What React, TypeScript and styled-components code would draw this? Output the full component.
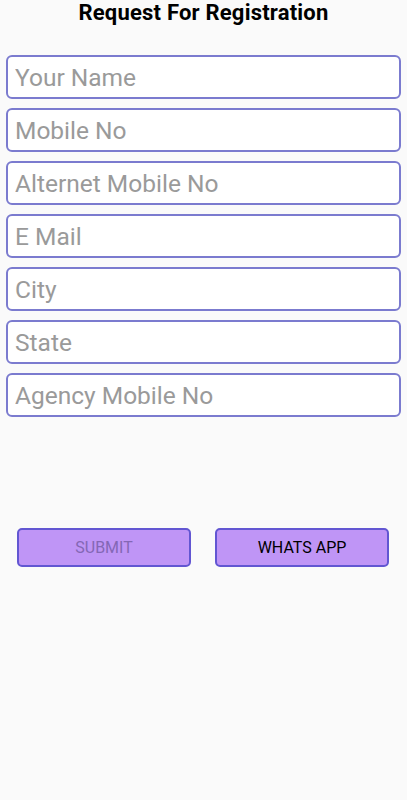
import styled, { createGlobalStyle } from "styled-components";

const colors = {
  bg: "#fafafa",
  inputBorder: "#7b7bcf",
  placeholder: "#9a9a9a",
  buttonFill: "#bf95f6",
  buttonBorder: "#6256d2",
  disabledText: "#8467b5",
  text: "#000000",
};

const GlobalStyle = createGlobalStyle`
  html, body {
    margin: 0;
    padding: 0;
    background: ${colors.bg};
    font-family: Roboto, "Noto Sans", sans-serif;
  }
  * {
    box-sizing: border-box;
  }
`;

const Page = styled.div`
  width: 407px;
  min-height: 800px;
  background: ${colors.bg};
  display: flex;
  flex-direction: column;
`;

const Title = styled.h1`
  margin: 0;
  height: 26px;
  line-height: 26px;
  text-align: center;
  font-size: 22px;
  font-weight: 700;
  letter-spacing: 0.2px;
  color: ${colors.text};
`;

const Form = styled.div`
  display: flex;
  flex-direction: column;
  gap: 9px;
  padding: 29px 6px 0 6px;
`;

const Field = styled.input`
  width: 100%;
  height: 44px;
  border: 2px solid ${colors.inputBorder};
  border-radius: 6px;
  background: #fff;
  padding: 0 7px;
  font-family: Roboto, "Noto Sans", sans-serif;
  font-size: 24.5px;
  color: ${colors.text};
  outline: none;

  &::placeholder {
    color: ${colors.placeholder};
  }
`;

const ButtonRow = styled.div`
  display: flex;
  gap: 24px;
  padding: 111px 18px 0 17px;
`;

const ActionButton = styled.button<{ $disabled?: boolean }>`
  flex: 1;
  height: 39px;
  border: 2px solid ${colors.buttonBorder};
  border-radius: 5px;
  background: ${colors.buttonFill};
  font-family: Roboto, "Noto Sans", sans-serif;
  font-size: 16px;
  text-transform: uppercase;
  color: ${(p) => (p.$disabled ? colors.disabledText : colors.text)};
  cursor: ${(p) => (p.$disabled ? "default" : "pointer")};
`;

const fields = [
  "Your Name",
  "Mobile No",
  "Alternet Mobile No",
  "E Mail",
  "City",
  "State",
  "Agency Mobile No",
];

const App = () => {
  return (
    <Page>
      <GlobalStyle />
      <Title>Request For Registration</Title>
      <Form>
        {fields.map((f) => (
          <Field key={f} placeholder={f} />
        ))}
      </Form>
      <ButtonRow>
        <ActionButton $disabled>Submit</ActionButton>
        <ActionButton>Whats App</ActionButton>
      </ButtonRow>
    </Page>
  );
};

export default App;
